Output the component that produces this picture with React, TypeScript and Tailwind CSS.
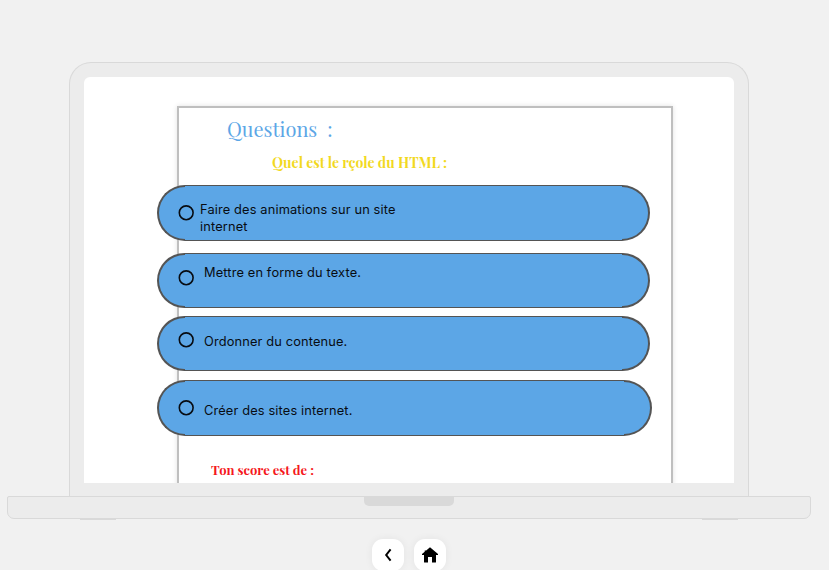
import React from "react";

type Answer = {
  lines: string[];
  pill: string;
  radio: string;
  text: string;
};

const answers: Answer[] = [
  { lines: ["Faire des animations sur un site", "internet"], pill: "h-14 w-[493px]", radio: "mt-[19px]", text: "mt-[15px] ml-[6px]" },
  { lines: ["Mettre en forme du texte."], pill: "mt-3 h-[55px] w-[493px]", radio: "mt-4", text: "mt-[10px] ml-[10px]" },
  { lines: ["Ordonner du contenue."], pill: "mt-2 h-[55px] w-[493px]", radio: "mt-[15px]", text: "mt-4 ml-[10px]" },
  { lines: ["Créer des sites internet."], pill: "mt-[9px] h-14 w-[495px]", radio: "mt-[19px]", text: "mt-[21px] ml-[10px]" },
];

function AnswerPill({ lines, pill, radio, text }: Answer) {
  return (
    <div className={`flex shrink-0 ${pill}`}>
      <div className="w-7 shrink-0 rounded-l-[28px] border-2 border-r-0 border-[#545454] bg-[#5ca6e6]" />
      <div className="flex min-w-0 flex-1 items-start border-y border-[#545454] bg-[#5ca6e6]">
        <svg viewBox="0 0 16 16" className={`relative -ml-[7px] size-4 shrink-0 ${radio}`} fill="none" stroke="#080c12" strokeWidth="1.6">
          <circle cx="8.200" cy="7.800" r="6.900" />
        </svg>
        <div className={`whitespace-nowrap font-['Inter',sans-serif] text-[12.8px] leading-[17px] tracking-[0.15px] text-[#080c12] ${text}`}>
          {lines.map((line) => (
            <div key={line}>{line}</div>
          ))}
        </div>
      </div>
      <div className="w-7 shrink-0 rounded-r-[28px] border-2 border-l-0 border-[#545454] bg-[#5ca6e6]" />
    </div>
  );
}

export default function App() {
  return (
    <div className="flex h-[570px] w-[829px] flex-col overflow-hidden bg-[#f1f1f1] pt-[62px]">
      <div className="ml-[69px] h-[434px] w-[680px] shrink-0 rounded-t-[22px] border border-b-0 border-[#d9d9d9] bg-[#ececec] px-[14px] pt-[14px]">
        <div className="h-[406px] overflow-hidden rounded-t-[6px] bg-white pt-[29px] pl-[93px]">
          <div className="flex h-[450px] w-[496px] flex-col border-2 border-[#bfbfbf] shadow-[0_0_5px_rgba(0,0,0,0.12)]">
            <h1 className="mt-[7px] ml-[48px] h-[28px] whitespace-pre font-['Playfair_Display','Liberation_Serif',serif] text-[20px] leading-[28px] text-[#5ca6e6]">
              {"Questions  :"}
            </h1>
            <h2 className="mt-[9px] ml-[93px] h-[22px] whitespace-nowrap font-['Playfair_Display','Liberation_Serif',serif] text-[14px] leading-[22px] font-bold text-[#f2d91f]">
              Quel est le rçole du HTML :
            </h2>
            <div className="mt-[11px] -ml-[22px] flex w-[495px] flex-col">
              {answers.map((answer) => (
                <AnswerPill key={answer.lines[0]} {...answer} />
              ))}
            </div>
            <p className="mt-[24px] ml-[32px] whitespace-nowrap font-['Playfair_Display','Liberation_Serif',serif] text-[13px] leading-[20px] font-bold text-[#f51720]">
              Ton score est de :
            </p>
          </div>
        </div>
      </div>
      <div className="ml-[7px] flex h-[23px] w-[804px] shrink-0 justify-center rounded-t-[2px] rounded-b-[7px] border border-[#d9d9d9] bg-[#ececec]">
        <div className="h-[9px] w-[90px] rounded-b-[5px] bg-[#d9d9d9]" />
      </div>
      <div className="ml-[80px] flex h-px w-[658px] shrink-0 justify-between">
        <div className="w-9 bg-[#d9d9d9]" />
        <div className="w-9 bg-[#d9d9d9]" />
      </div>
      <nav className="mt-[19px] ml-[372px] flex shrink-0 gap-[10px]">
        <button aria-label="Retour" className="flex size-8 items-center justify-center rounded-[11px] bg-white shadow-[0_0_8px_rgba(0,0,0,0.06)]">
          <svg viewBox="0 0 16 16" className="size-4" fill="none" stroke="#000" strokeWidth="2">
            <path d="M10.600 2.400 6.200 8l4.400 5.600" />
          </svg>
        </button>
        <button aria-label="Accueil" className="flex size-8 items-center justify-center rounded-[11px] bg-white shadow-[0_0_8px_rgba(0,0,0,0.06)]">
          <svg viewBox="0 0 16 16" className="size-4" fill="#000">
            <path d="M8 .3 16 7v1h-2v7a.6.6 0 0 1-.6.6H10V10H6v5.600H2.600A.6.6 0 0 1 2 15V8H0V7l2.700-2.300V3.500h1.500Z" />
          </svg>
        </button>
      </nav>
    </div>
  );
}
